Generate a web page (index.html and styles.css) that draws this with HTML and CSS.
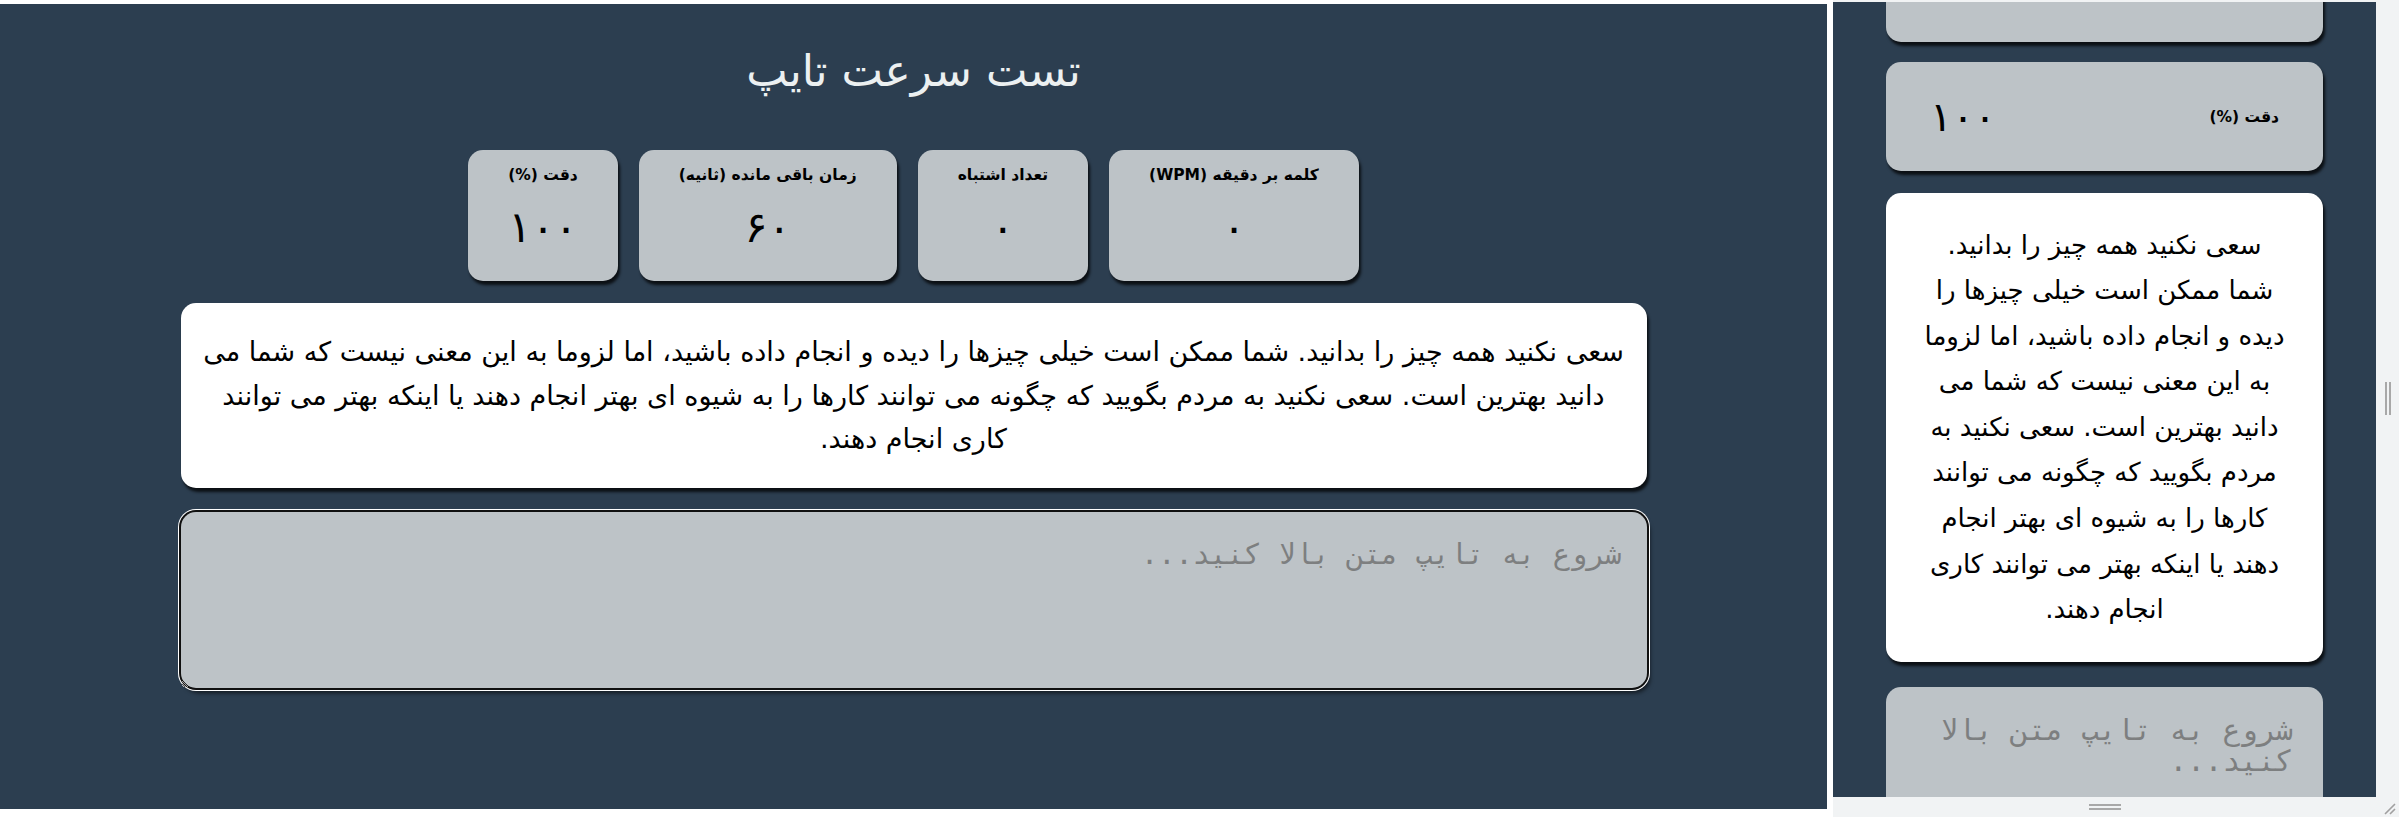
FILE: index.html
```html
<!DOCTYPE html>
<html lang="fa">
<head>
<meta charset="utf-8">
<title>تست سرعت تایپ</title>
<link rel="stylesheet" href="styles.css">
</head>
<body>
<div class="screen">
  <main class="desk" dir="rtl">
    <div class="container">
      <h1 class="title">تست سرعت تایپ</h1>
      <div class="stats">
        <div class="stat"><div class="stat-label">کلمه بر دقیقه (WPM)</div><div class="stat-value">۰</div></div>
        <div class="stat"><div class="stat-label">تعداد اشتباه</div><div class="stat-value">۰</div></div>
        <div class="stat"><div class="stat-label">زمان باقی مانده (ثانیه)</div><div class="stat-value">۶۰</div></div>
        <div class="stat"><div class="stat-label">دقت (%)</div><div class="stat-value">۱۰۰</div></div>
      </div>
      <div class="text-card">سعی نکنید همه چیز را بدانید. شما ممکن است خیلی چیزها را دیده و انجام داده باشید، اما لزوما به این معنی نیست که شما می دانید بهترین است. سعی نکنید به مردم بگویید که چگونه می توانند کارها را به شیوه ای بهتر انجام دهند یا اینکه بهتر می توانند کاری انجام دهند.</div>
      <textarea class="typing focused" dir="rtl" placeholder="شروع به تایپ متن بالا کنید..."></textarea>
    </div>
  </main>
  <aside class="device">
    <div class="device-main">
      <div class="viewport" dir="rtl">
        <div class="m-container">
          <div class="m-stat"><div class="stat-label">کلمه بر دقیقه (WPM)</div><div class="stat-value">۰</div></div>
          <div class="m-stat"><div class="stat-label">تعداد اشتباه</div><div class="stat-value">۰</div></div>
          <div class="m-stat"><div class="stat-label">زمان باقی مانده (ثانیه)</div><div class="stat-value">۶۰</div></div>
          <div class="m-stat"><div class="stat-label">دقت (%)</div><div class="stat-value">۱۰۰</div></div>
          <div class="text-card m-text">سعی نکنید همه چیز را بدانید.<br>شما ممکن است خیلی چیزها را<br>دیده و انجام داده باشید، اما لزوما<br>به این معنی نیست که شما می<br>دانید بهترین است. سعی نکنید به<br>مردم بگویید که چگونه می توانند<br>کارها را به شیوه ای بهتر انجام<br>دهند یا اینکه بهتر می توانند کاری<br>انجام دهند.</div>
          <textarea class="typing m-typing" dir="rtl" placeholder="شروع به تایپ متن بالا کنید..."></textarea>
        </div>
      </div>
      <div class="vstrip"><span class="vgrip"></span></div>
    </div>
    <div class="hbar">
      <span class="hgrip"></span>
      <svg class="corner" width="16" height="16" viewBox="0 0 16 16"><path d="M14 4 L4 14 M14 9 L9 14" stroke="#a0a0a0" stroke-width="1.6" fill="none"/></svg>
    </div>
  </aside>
</div>
</body>
</html>
```
FILE: styles.css
```css
* { box-sizing: border-box; }
html, body { margin: 0; padding: 0; background: #ffffff; }
body { font-family: "DejaVu Sans", sans-serif; }

.screen {
  display: flex;
  width: 2399px;
  height: 817px;
  gap: 6px;
  overflow: hidden;
}

/* ---------- desktop view ---------- */
.desk {
  width: 1827px;
  height: 805px;
  margin-top: 4px;
  background: #2c3e50;
  flex: none;
}
.container {
  width: 1466px;
  margin: 0 auto;
  padding-top: 41px;
}
.title {
  margin: 0;
  font-size: 44px;
  line-height: 51px;
  font-weight: 400;
  color: #ecf0f1;
  text-align: center;
}
.stats {
  display: flex;
  justify-content: center;
  gap: 21px;
  margin-top: 54px;
  margin-bottom: 22px;
}
.stat {
  background: #bdc3c7;
  border-radius: 15px;
  height: 131px;
  padding: 15px 40px 0;
  text-align: center;
  box-shadow: 2px 4px 3px rgba(0,0,0,0.75);
}
.stat-label {
  font-size: 15.5px;
  line-height: 20px;
  font-weight: 700;
  color: #000;
  white-space: nowrap;
}
.stat-value {
  font-size: 43px;
  line-height: 48px;
  font-weight: 400;
  color: #000;
  margin-top: 18px;
}
.text-card {
  background: #ffffff;
  border-radius: 15px;
  padding: 27px 18px;
  font-size: 27px;
  line-height: 43.5px;
  text-align: center;
  color: #000;
  box-shadow: 2px 4px 3px rgba(0,0,0,0.75);
}
.typing {
  display: block;
  width: 100%;
  height: 176px;
  margin-top: 24px;
  border: none;
  border-radius: 15px;
  background: #bdc3c7;
  padding: 27px 25px;
  font-family: "DejaVu Sans Mono", monospace;
  font-size: 28.5px;
  line-height: 31px;
  color: #000;
  resize: vertical;
  outline: none;
}
.typing::placeholder { color: #7d7f80; }
.focused {
  box-shadow: 0 0 0 2px #101010, 0 0 0 3px #ffffff, 3px 5px 4px rgba(0,0,0,0.6);
}

/* ---------- device (responsive) view ---------- */
.device {
  width: 566px;
  height: 817px;
  flex: none;
  display: flex;
  flex-direction: column;
  background: #f1f3f4;
}
.device-main {
  display: flex;
  height: 797px;
  padding-top: 2px;
}
.viewport {
  width: 543px;
  height: 795px;
  background: #2c3e50;
  overflow: hidden;
  flex: none;
}
.vstrip {
  flex: 1;
  display: flex;
  align-items: center;
  justify-content: center;
  padding-bottom: 2px;
}
.vgrip {
  width: 6px;
  height: 33px;
  border-left: 2px solid #a8a8a8;
  border-right: 2px solid #a8a8a8;
}
.m-container {
  width: 437px;
  margin: -327px auto 0;
  display: flex;
  flex-direction: column;
}
.m-stat {
  height: 109px;
  background: #bdc3c7;
  border-radius: 15px;
  padding: 0 44px;
  display: flex;
  justify-content: space-between;
  align-items: center;
  margin-bottom: 20px;
  box-shadow: 2px 4px 3px rgba(0,0,0,0.75);
}
.m-stat .stat-value { margin-top: 0; font-size: 41px; }
.m-stat:nth-child(4) { margin-bottom: 22px; }
.m-text {
  padding: 29.5px 16px;
  font-size: 26px;
  line-height: 45.6px;
}
.m-typing {
  margin-top: 25px;
  padding: 28px 30px;
  height: 200px;
  font-size: 29.3px;
}
.hbar {
  height: 20px;
  position: relative;
  display: flex;
  align-items: center;
  justify-content: center;
  padding-right: 23px;
}
.hgrip {
  width: 32px;
  height: 6px;
  border-top: 2px solid #a8a8a8;
  border-bottom: 2px solid #a8a8a8;
}
.corner {
  position: absolute;
  right: 2px;
  bottom: 1px;
}
```
